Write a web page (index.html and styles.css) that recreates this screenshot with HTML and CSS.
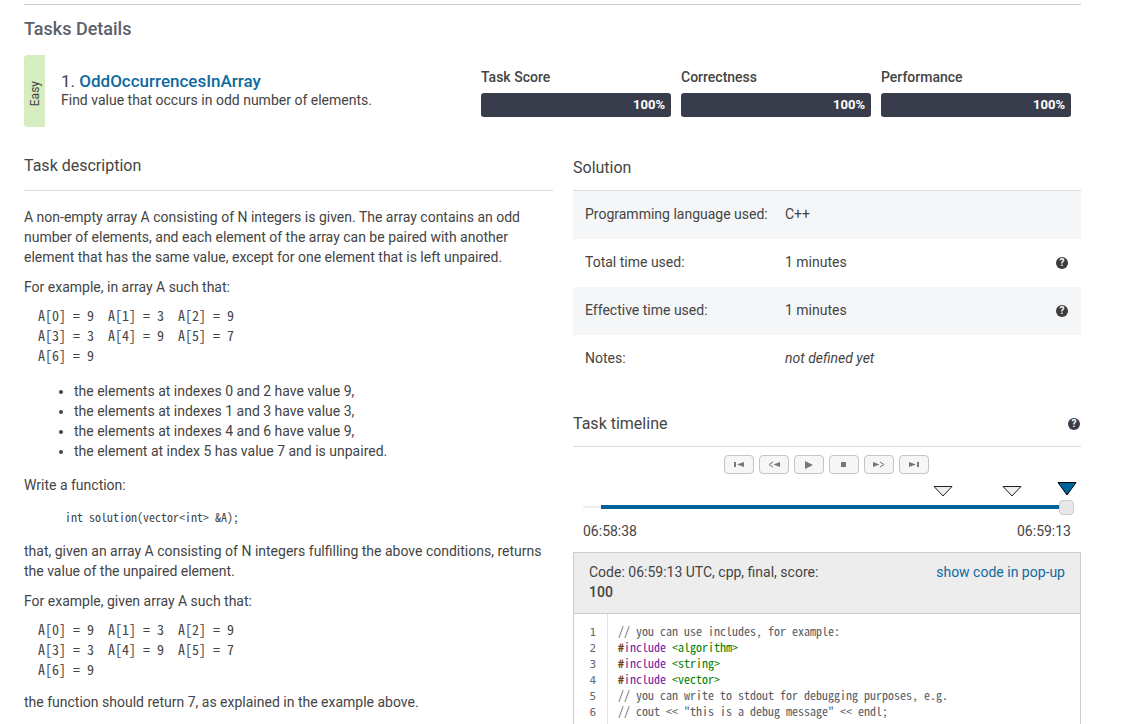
FILE: index.html
```html
<!DOCTYPE html>
<html lang="en">

<head>
    <meta charset="utf-8">
    <title>Tasks Details</title>
    <link rel="stylesheet" href="styles.css">
</head>

<body>
    <main class="report">
        <h2 class="report-title">Tasks Details</h2>

        <section class="task-header">
            <div class="difficulty"><span>Easy</span></div>
            <div class="task-name">
                <h3>1. <a href="#">OddOccurrencesInArray</a></h3>
                <p>Find value that occurs in odd number of elements.</p>
            </div>
            <div class="scores">
                <div class="score">
                    <span>Task Score</span>
                    <div class="bar">100%</div>
                </div>
                <div class="score">
                    <span>Correctness</span>
                    <div class="bar">100%</div>
                </div>
                <div class="score">
                    <span>Performance</span>
                    <div class="bar">100%</div>
                </div>
            </div>
        </section>

        <div class="columns">
            <section class="description">
                <h4>Task description</h4>
                <div class="description-body">
                    <p>A non-empty array A consisting of N integers is given. The array contains an odd number of elements, and each element of the array can be paired with another element that has the same value, except for one element that is left unpaired.</p>
                    <p>For example, in array A such that:</p>
<pre class="sample">  A[0] = 9  A[1] = 3  A[2] = 9
  A[3] = 3  A[4] = 9  A[5] = 7
  A[6] = 9</pre>
                    <ul>
                        <li>the elements at indexes 0 and 2 have value 9,</li>
                        <li>the elements at indexes 1 and 3 have value 3,</li>
                        <li>the elements at indexes 4 and 6 have value 9,</li>
                        <li>the element at index 5 has value 7 and is unpaired.</li>
                    </ul>
                    <p>Write a function:</p>
                    <pre class="signature">int solution(vector&lt;int&gt; &amp;A);</pre>
                    <p>that, given an array A consisting of N integers fulfilling the above conditions, returns the value of the unpaired element.</p>
                    <p>For example, given array A such that:</p>
<pre class="sample">  A[0] = 9  A[1] = 3  A[2] = 9
  A[3] = 3  A[4] = 9  A[5] = 7
  A[6] = 9</pre>
                    <p>the function should return 7, as explained in the example above.</p>
                </div>
            </section>

            <section class="solution">
                <h4>Solution</h4>
                <table class="info">
                    <tr>
                        <th scope="row">Programming language used:</th>
                        <td>C++</td>
                        <td class="help-cell"></td>
                    </tr>
                    <tr>
                        <th scope="row">Total time used:</th>
                        <td>1 minutes</td>
                        <td class="help-cell"><button class="help" aria-label="Help">?</button></td>
                    </tr>
                    <tr>
                        <th scope="row">Effective time used:</th>
                        <td>1 minutes</td>
                        <td class="help-cell"><button class="help" aria-label="Help">?</button></td>
                    </tr>
                    <tr>
                        <th scope="row">Notes:</th>
                        <td><em>not defined yet</em></td>
                        <td class="help-cell"></td>
                    </tr>
                </table>

                <h4 class="timeline-title">Task timeline <button class="help help-dark" aria-label="Help">?</button></h4>

                <div class="player">
                    <button aria-label="First"><svg width="10" height="8"><path d="M0 1h2v5H0zM10 1v5L3 3.500z"/></svg></button>
                    <button aria-label="Back"><svg width="12" height="8"><path d="M12 1v5L5.500 3.500z"/><path class="line" d="M5 1L1 3.500L5 6"/></svg></button>
                    <button aria-label="Play"><svg width="8" height="8"><path d="M0 0v8L8 4z"/></svg></button>
                    <button aria-label="Stop"><svg width="5" height="5"><path d="M0 0h5v5H0z"/></svg></button>
                    <button aria-label="Forward"><svg width="12" height="8"><path d="M0 1v5L6.500 3.500z"/><path class="line" d="M7 1L11 3.500L7 6"/></svg></button>
                    <button aria-label="Last"><svg width="10" height="8"><path d="M8 1h2v5H8zM0 1v5L7 3.500z"/></svg></button>
                </div>

                <div class="timeline">
                    <svg class="marker marker-1" width="20" height="11"><path d="M1 .5h18L10 10z"/></svg>
                    <svg class="marker marker-2" width="20" height="11"><path d="M1 .5h18L10 10z"/></svg>
                    <svg class="marker marker-3" width="20" height="14"><path d="M1 .5h18L10 13z"/></svg>
                    <input type="range" min="0" max="35" value="35" aria-label="Task timeline">
                </div>
                <div class="times">
                    <span>06:58:38</span>
                    <span>06:59:13</span>
                </div>

                <div class="code-box">
                    <div class="code-head">
                        <div class="code-info">Code: 06:59:13 UTC, cpp, final, score: <b>100</b></div>
                        <a href="#">show code in pop-up</a>
                    </div>
                    <div class="code-body">
<pre class="lines">1
2
3
4
5
6</pre>
<pre class="code"><span class="comment">// you can use includes, for example:</span>
<span class="hash">#</span><span class="keyword">include</span> <span class="header">&lt;algorithm&gt;</span>
<span class="hash">#</span><span class="keyword">include</span> <span class="header">&lt;string&gt;</span>
<span class="hash">#</span><span class="keyword">include</span> <span class="header">&lt;vector&gt;</span>
<span class="comment">// you can write to stdout for debugging purposes, e.g.</span>
<span class="comment">// cout &lt;&lt; "this is a debug message" &lt;&lt; endl;</span></pre>
                    </div>
                </div>
            </section>
        </div>
    </main>
</body>

</html>
```
FILE: styles.css
```css
* {
    box-sizing: border-box;
}

html {
    scrollbar-width: none;
}

body {
    margin: 0;
    background-color: #fff;
    color: #444;
    font-family: Roboto, sans-serif;
    font-size: 14px;
    line-height: 20px;
}

h2, h3, h4, p, pre, ul {
    margin: 0;
}

a {
    color: #0f6a9f;
    text-decoration: none;
}

pre {
    font-family: "Noto Sans Mono CJK KR", "Liberation Mono", monospace;
}

.report {
    margin: 4px 64px 0 24px;
    border-top: 1px solid #ccc;
}

.report-title {
    padding: 12px 0 14px;
    color: #5b6069;
    font-size: 18px;
    font-weight: 500;
    line-height: 24px;
}

.task-header {
    display: flex;
    height: 72px;
}

.difficulty {
    display: flex;
    align-items: center;
    justify-content: center;
    width: 21px;
    padding-top: 6px;
    border-radius: 4px 0 0 4px;
    background-color: #d5edbf;
}

.difficulty span {
    writing-mode: vertical-rl;
    transform: rotate(180deg);
    font-size: 12px;
}

.task-name {
    flex: 1;
    padding: 16px 0 0 16px;
}

.task-name h3 {
    font-size: 17px;
    font-weight: 400;
}

.task-name a {
    font-weight: 500;
}

.task-name p {
    line-height: 18px;
}

.scores {
    display: grid;
    grid-template-columns: repeat(3, 190px);
    gap: 10px;
    padding: 12px 10px 0 0;
    font-weight: 500;
}

.bar {
    height: 24px;
    margin-top: 6px;
    padding: 0 6px;
    border-radius: 3px;
    background-color: #393c4b;
    color: #fff;
    font-size: 13px;
    font-weight: 700;
    line-height: 24px;
    text-align: right;
}

.columns {
    display: grid;
    grid-template-columns: 529fr 508fr;
    gap: 20px;
    padding-top: 26px;
}

h4 {
    border-bottom: 1px solid #ddd;
    font-size: 16px;
    font-weight: 400;
    line-height: 24px;
}

.description h4 {
    padding: 1px 0 12px;
}

.description-body {
    padding-top: 16px;
}

.description-body p {
    margin-bottom: 10px;
}

.description-body .sample {
    margin: -2px 0 13px;
    font-size: 14px;
    line-height: 20px;
}

.description-body ul {
    margin-bottom: 14px;
    padding: 3px 0 0 50px;
}

.signature {
    margin: 12px 0 14px;
    padding-left: 41px;
    font-size: 12px;
}

.solution h4 {
    padding: 3px 0 10px;
}

.info {
    width: 100%;
    border-collapse: collapse;
}

.info tr:nth-child(odd) {
    background-color: #f5f6f8;
}

.info th,
.info td {
    height: 48px;
    padding: 0 0 2px 12px;
    font-weight: 400;
    text-align: left;
}

.info th {
    width: 200px;
}

.info .help-cell {
    padding-right: 13px;
    text-align: right;
}

.help {
    display: inline-block;
    width: 12px;
    height: 12px;
    padding: 0;
    border: none;
    border-radius: 50%;
    background-color: #3c3c3c;
    color: #fff;
    font-family: Roboto, sans-serif;
    font-size: 10px;
    font-weight: 700;
    line-height: 12px;
    text-align: center;
    vertical-align: middle;
}

.help-dark {
    background-color: #393c4b;
}

.solution .timeline-title {
    display: flex;
    align-items: center;
    justify-content: space-between;
    margin-top: 28px;
    padding: 1px 1px 10px 0;
}

.player {
    display: flex;
    justify-content: center;
    gap: 5px;
    padding: 8px 2px 8px 0;
}

.player button {
    display: flex;
    align-items: center;
    justify-content: center;
    width: 30px;
    height: 19px;
    padding: 0;
    border: 1px solid #c4c4c4;
    border-radius: 4px;
    background-color: #f6f6f6;
}

.player svg {
    fill: #777;
}

.player .line {
    fill: none;
    stroke: #777;
}

.timeline {
    position: relative;
    height: 34px;
    margin: 0 7px 0 10px;
    padding-top: 18px;
}

.timeline input {
    display: block;
    width: 100%;
    height: 15px;
    margin: 0;
    appearance: none;
    background: linear-gradient(#00629b, #00629b) 18px 5px / 100% 4px no-repeat,
        linear-gradient(#eee, #eee) 0 6px / 18px 2px no-repeat;
}

.timeline input::-webkit-slider-thumb {
    appearance: none;
    width: 15px;
    height: 15px;
    border: 1px solid #ccc;
    border-radius: 4px;
    background-color: #e8e8e8;
}

.marker {
    position: absolute;
    top: 4px;
    fill: #eee;
    stroke: #222;
}

/* marker positions along the track */
.marker-1 {
    right: 121px;
}

.marker-2 {
    right: 52px;
}

.marker-3 {
    top: 0;
    right: -3px;
    fill: #00629b;
    stroke: #000;
}

.times {
    display: flex;
    justify-content: space-between;
    padding: 5px 10px 11px;
}

.code-box {
    border: 1px solid #ccc;
}

.code-head {
    display: flex;
    justify-content: space-between;
    padding: 9px 15px 11px;
    border-bottom: 1px solid #ccc;
    background-color: #ededed;
}

.code-info {
    width: 240px;
}

.code-info b {
    display: block;
    font-weight: 500;
}

.code-body {
    display: flex;
    font-size: 12px;
}

.code-body pre {
    line-height: 16px;
}

.code-body .lines {
    width: 34px;
    padding: 11px 11px 0 0;
    border-right: 1px solid #e4e4e4;
    color: #5f6672;
    font-family: "DejaVu Sans Mono", monospace;
    font-size: 11px;
    text-align: right;
}

.code-body .code {
    padding: 9px 0 16px 10px;
}

.comment {
    color: #555c66;
}

.hash {
    color: #804000;
    font-weight: 700;
}

.keyword {
    color: #7020a0;
}

.header {
    color: #008000;
}
```
